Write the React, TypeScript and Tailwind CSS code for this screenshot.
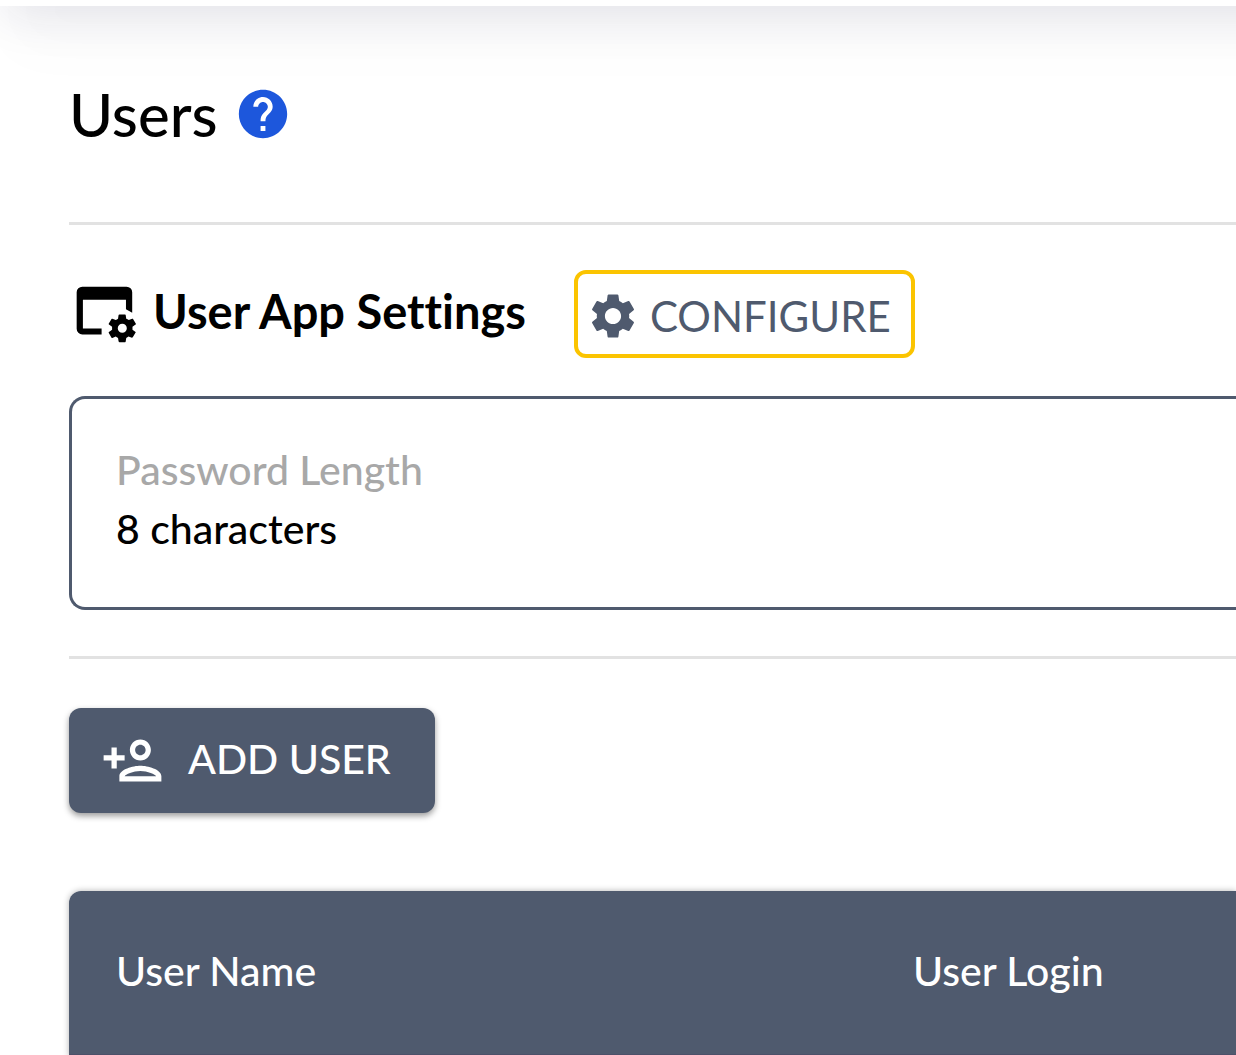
import { MdHelp, MdOutlinePersonAdd, MdSettings } from "react-icons/md";

interface Setting {
  label: string;
  value: string;
}

const settings: Setting[] = [{ label: "Password Length", value: "8 characters" }];

function AppSettingsIcon() {
  return (
    <svg
      viewBox="0 0 24 24"
      fill="currentColor"
      className="size-[68px] shrink-0"
      aria-hidden="true"
    >
      <path d="M10.8 20.3H4a2 2 0 0 1-2-2V5.4a2 2 0 0 1 2-2h15.6a2 2 0 0 1 2 2v7.2l-2.2-1.2V8H4.2v10.2h6.6z" />
      <path d="M21.7 18.6v-1l1.1-.8c.1-.1.2-.2.1-.3l-1-1.7c0-.1-.2-.1-.3-.1l-1.2.5c-.3-.2-.6-.4-.9-.5l-.2-1.3c0-.1-.1-.2-.2-.2h-2c-.2 0-.3.1-.3.2l-.2 1.3c-.3.2-.5.3-.8.5l-1.2-.5c-.1 0-.2 0-.3.1l-1 1.7c0 .1 0 .2.1.3l1.1.8v1l-1.1.8c-.1.1-.2.2-.1.3l1 1.7c.1.1.2.1.3.1l1.2-.5c.2.2.5.4.8.5l.2 1.3c.1.1.2.2.3.2h2c.1 0 .2-.1.2-.2l.2-1.3c.3-.2.5-.3.8-.5l1.2.4c.1 0 .2 0 .3-.1l1-1.7c.1-.1.1-.2 0-.2zM18.1 19.7a1.6 1.6 0 1 1 0-3.2 1.6 1.6 0 0 1 0 3.2z" />
    </svg>
  );
}

export default function App() {
  return (
    <div className="min-h-screen overflow-hidden bg-white font-['Lato',sans-serif] text-black [font-variant-ligatures:none]">
      <header className="-mt-24 -mr-24 h-[102px] bg-white shadow-[0_14px_48px_-5px_rgba(30,30,80,0.11),0_55px_60px_-10px_rgba(30,30,60,0.02)]" />

      <main className="pt-[70px] pl-[69px]">
        <div className="flex h-[76px] items-center gap-4">
          <h1 className="text-[60px] leading-[76px] font-medium">Users</h1>
          <button type="button" aria-label="Help" className="text-[#1d57dc]">
            <MdHelp className="size-[58px]" />
          </button>
        </div>

        <hr className="mt-[70px] border-t-[3px] border-[#e2e2e2]" />

        <section>
          <div className="mt-[45px] flex h-[88px] items-center gap-12">
            <div className="flex items-center gap-[14px] pb-[6px] pl-[2px]">
              <AppSettingsIcon />
              <h2 className="text-[47px] leading-[56px] font-bold">User App Settings</h2>
            </div>
            <button
              type="button"
              className="flex h-[88px] items-center gap-[10px] rounded-xl border-4 border-[#fbc400] pt-1 pr-5 pl-2 text-[42px] text-[#4f5a6e]"
            >
              <MdSettings className="size-[54px]" />
              CONFIGURE
            </button>
          </div>

          <dl className="mt-[38px] rounded-l-2xl border-[3px] border-r-0 border-[#4f5a6e] px-11 pt-[41px] pb-[49px] text-[41px] leading-[59px] font-medium">
            {settings.map((setting) => (
              <div key={setting.label}>
                <dt className="text-[#a8a8a8]">{setting.label}</dt>
                <dd>{setting.value}</dd>
              </div>
            ))}
          </dl>
        </section>

        <hr className="mt-[46px] border-t-[3px] border-[#e2e2e2]" />

        <button
          type="button"
          className="mt-[49px] flex h-[105px] items-center gap-6 rounded-xl bg-[#4f5a6e] pr-11 pl-8 text-[41px] font-medium text-white shadow-[0_3px_6px_rgba(0,0,0,0.4)]"
        >
          <MdOutlinePersonAdd className="size-[63px]" />
          <span className="pb-1">ADD USER</span>
        </button>

        <div className="mt-[78px] overflow-hidden rounded-tl-xl shadow-[0_0_6px_rgba(0,0,0,0.3)]">
          <table className="w-full table-fixed text-left text-[41px]">
            <thead className="bg-[#4f5a6e] text-white">
              <tr className="h-[164px] border-b-[3px] border-[#4c5069]">
                <th scope="col" className="w-[797px] px-[47px] pb-1 font-medium">
                  User Name
                </th>
                <th scope="col" className="px-[47px] pb-1 font-medium">
                  User Login
                </th>
              </tr>
            </thead>
          </table>
        </div>
      </main>
    </div>
  );
}
